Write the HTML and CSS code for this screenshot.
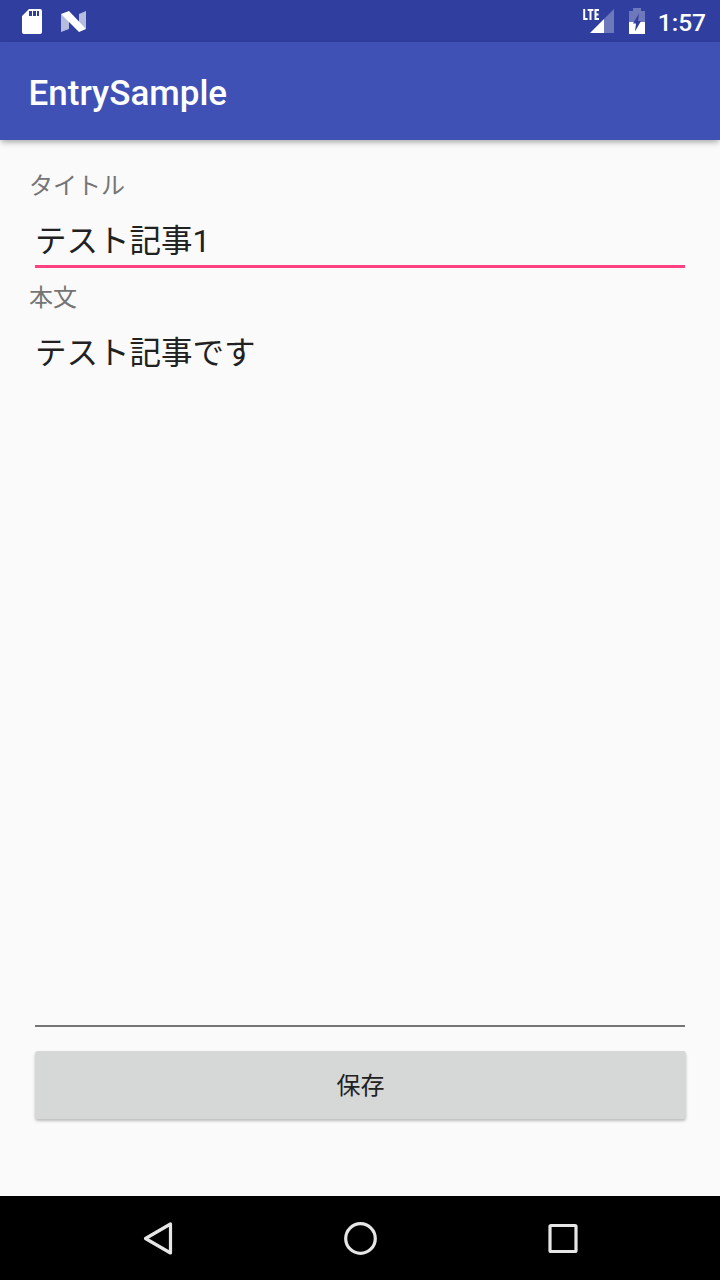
FILE: index.html
```html
<!DOCTYPE html>
<html lang="ja">

<head>
  <meta charset="UTF-8">
  <meta name="viewport" content="width=device-width, initial-scale=1.0">
  <title>EntrySample</title>

  <link rel="stylesheet" href="styles.css">
</head>

<body>
  <div class="screen">
    <div class="status-bar">
      <!-- SD card -->
      <svg class="icon-sd" width="20" height="25" viewBox="0 0 20 25">
        <path fill="#fff" fill-rule="evenodd" d="M7 0H18Q20 0 20 2V23Q20 25 18 25H2Q0 25 0 23V7ZM7 2V7H10V2ZM11 2V7H14V2ZM15 2V7H17V2Z" />
      </svg>
      <!-- Android N -->
      <svg class="icon-n" width="25" height="21" viewBox="0 0 25 21">
        <path fill="#fff" opacity=".65" d="M0 3L8 9V18L0 21ZM18 3L25 0V18L18 12Z" />
        <path fill="#fff" d="M0 3L8 0L25 18L18 21Z" />
      </svg>
      <div class="spacer"></div>
      <!-- LTE signal -->
      <svg class="icon-signal" width="32" height="26" viewBox="0 0 32 26">
        <path fill="#fff" opacity=".3" d="M31 1V25H21V11Z" />
        <path fill="#fff" d="M7 25L21 11V25Z" />
        <path fill="none" stroke="#fff" stroke-width="2" d="M1.200 1V11H4.600M4.600 2H10.400M7.500 2V12M16 2H12.500V11H16M12.500 6.500H15.500" />
      </svg>
      <!-- charging battery -->
      <svg class="icon-battery" width="16" height="26" viewBox="0 0 16 26">
        <path fill="#fff" opacity=".3" d="M4 0H12V3H16V14H0V3H4Z" />
        <path fill="#fff" d="M0 14H16V26H0Z" />
        <path fill="#303f9f" d="M10 5.500L4 15.500H7L6 23.500L12 13H9Z" />
      </svg>
      <span class="time">1:57</span>
    </div>

    <header class="app-bar">
      <h1>EntrySample</h1>
    </header>

    <form class="entry-form">
      <label for="title">タイトル</label>
      <input type="text" id="title" name="title" value="テスト記事1">

      <label for="body">本文</label>
      <textarea id="body" name="body">テスト記事です</textarea>

      <button class="button" type="button">保存</button>
    </form>

    <nav class="nav-bar">
      <svg width="36" height="36" viewBox="0 0 36 36">
        <path d="M3.500 18.500L28.500 4V33Z" />
      </svg>
      <svg width="36" height="36" viewBox="0 0 36 36">
        <circle cx="17.500" cy="18.500" r="14.800" />
      </svg>
      <svg width="36" height="36" viewBox="0 0 36 36">
        <rect x="6" y="5.500" width="26" height="26" rx="1" />
      </svg>
    </nav>
  </div>
</body>

</html>
```
FILE: styles.css
```css
* {
  box-sizing: border-box;
}

body {
  font-family: Roboto, "Noto Sans CJK JP", sans-serif;
  background-color: #fafafa;
  margin: 0;
  padding: 0;
}

.screen {
  display: flex;
  flex-direction: column;
  width: 720px;
  height: 1280px;
  overflow: hidden;
}

.status-bar {
  display: flex;
  align-items: flex-start;
  height: 42px;
  padding: 0 14px 0 22px;
  background-color: #303f9f;
  color: #fff;
}

.spacer {
  flex: 1;
}

.icon-sd {
  margin-top: 9px;
}

.icon-n {
  margin: 11px 0 0 19px;
}

.icon-signal {
  margin: 8px 14px 0 0;
}

.icon-battery {
  margin: 8px 13px 0 0;
}

.time {
  font-size: 24.5px;
  font-weight: 500;
  line-height: 45px;
}

.app-bar {
  display: flex;
  align-items: center;
  height: 98px;
  padding: 6px 28px 0 28.5px;
  background-color: #3f51b5;
  color: #fff;
  /* keep the shadow off the status bar */
  box-shadow: 0 3px 6px -1px rgba(0, 0, 0, 0.35);
}

h1 {
  margin: 0;
  font-size: 35px;
  font-weight: 500;
  line-height: 42px;
}

.entry-form {
  display: flex;
  flex: 1;
  flex-direction: column;
  padding: 28px 28px 0;
}

label {
  height: 33px;
  padding-left: 1px;
  font-size: 24px;
  line-height: 37px;
  color: #757575;
}

input,
textarea {
  margin: 0 7px;
  padding: 0;
  border: none;
  border-radius: 0;
  outline: none;
  background: none;
  font-family: inherit;
  font-size: 31.5px;
  color: #212121;
  resize: none;
}

input {
  height: 67px;
  padding-top: 10px;
  margin-bottom: 12px;
  border-bottom: 3px solid #ff4081;
}

textarea {
  height: 714px;
  padding-top: 18px;
  line-height: 46px;
  border-bottom: 2px solid #757575;
}

.button {
  height: 68px;
  margin: 24px 6px 0 7px;
  padding: 0 0 4px;
  background-color: #d6d8d7;
  color: #212121;
  font-family: inherit;
  font-size: 24px;
  font-weight: 400;
  border: none;
  border-radius: 3px;
  box-shadow: 0 2px 3px rgba(0, 0, 0, 0.25);
}

.nav-bar {
  display: flex;
  justify-content: space-between;
  height: 84px;
  padding: 24px 140px 0 142px;
  background-color: #000;
}

.nav-bar svg {
  fill: none;
  stroke: #e6e6e6;
  stroke-width: 3.2;
  stroke-linejoin: round;
}
```
